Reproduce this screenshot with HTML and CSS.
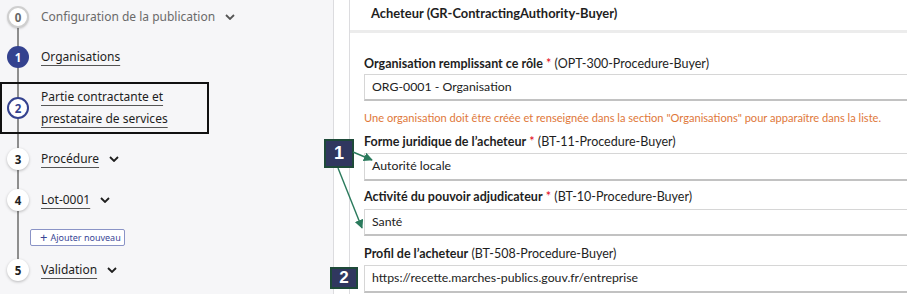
FILE: index.html
```html
<!DOCTYPE html>
<html lang="fr">
<head>
<meta charset="utf-8">
<title>Partie contractante</title>
<link rel="stylesheet" href="styles.css">
</head>
<body>
<div class="page">
  <aside class="sidebar">
    <div class="steps">
      <div class="rail"></div>
      <div class="step s0">
        <span class="dot dot-muted">0</span>
        <span class="lbl lbl-muted">Configuration de la publication</span>
        <svg class="chev" viewBox="0 0 10 6" width="10" height="6"><path d="M1 1l4 4 4-4" fill="none" stroke="#555" stroke-width="1.8"/></svg>
      </div>
      <div class="step s1">
        <span class="dot dot-done">1</span>
        <span class="lbl link">Organisations</span>
      </div>
      <div class="step s2 current">
        <span class="dot dot-current">2</span>
        <span class="lbl link two">Partie contractante et<br>prestataire de services</span>
      </div>
      <div class="step s3">
        <span class="dot">3</span>
        <span class="lbl link">Procédure</span>
        <svg class="chev" viewBox="0 0 10 6" width="10" height="6"><path d="M1 1l4 4 4-4" fill="none" stroke="#1e1e1e" stroke-width="1.8"/></svg>
      </div>
      <div class="step s4">
        <span class="dot">4</span>
        <span class="lbl link">Lot-0001</span>
        <svg class="chev" viewBox="0 0 10 6" width="10" height="6"><path d="M1 1l4 4 4-4" fill="none" stroke="#1e1e1e" stroke-width="1.8"/></svg>
      </div>
      <button class="add"><span class="plus">+</span> Ajouter nouveau</button>
      <div class="step s5">
        <span class="dot">5</span>
        <span class="lbl link">Validation</span>
        <svg class="chev" viewBox="0 0 10 6" width="10" height="6"><path d="M1 1l4 4 4-4" fill="none" stroke="#1e1e1e" stroke-width="1.8"/></svg>
      </div>
    </div>
  </aside>
  <div class="gutter"></div>
  <main class="card">
    <div class="card-head">Acheteur (GR-ContractingAuthority-Buyer)</div>
    <div class="form">
      <div class="field f1">
        <div class="label"><b>Organisation remplissant ce rôle</b> <span class="req">*</span> (OPT-300-Procedure-Buyer)</div>
        <div class="input">ORG-0001 - Organisation</div>
        <div class="hint">Une organisation doit être créée et renseignée dans la section "Organisations" pour apparaître dans la liste.</div>
      </div>
      <div class="field f2">
        <div class="label"><b>Forme juridique de l’acheteur</b> <span class="req">*</span> (BT-11-Procedure-Buyer)</div>
        <div class="input">Autorité locale</div>
      </div>
      <div class="field f3">
        <div class="label"><b>Activité du pouvoir adjudicateur</b> <span class="req">*</span> (BT-10-Procedure-Buyer)</div>
        <div class="input">Santé</div>
      </div>
      <div class="field f4">
        <div class="label"><b>Profil de l’acheteur</b> (BT-508-Procedure-Buyer)</div>
        <div class="input">https://recette.marches-publics.gouv.fr/entreprise</div>
      </div>
    </div>
  </main>
</div>
<div class="badge badge1">1</div>
<div class="badge badge2">2</div>
<svg class="arrows" width="907" height="294" viewBox="0 0 907 294">
  <defs>
    <marker id="ah" viewBox="0 0 10 10" refX="9" refY="5" markerWidth="9" markerHeight="9" markerUnits="userSpaceOnUse" orient="auto">
      <path d="M0 0L10 5L0 10z" fill="#2a7a5c"/>
    </marker>
  </defs>
  <line x1="353" y1="152" x2="372" y2="160" stroke="#2a7a5c" stroke-width="1.4" marker-end="url(#ah)"/>
  <line x1="338" y1="168" x2="362" y2="228" stroke="#2a7a5c" stroke-width="1.4" marker-end="url(#ah)"/>
</svg>
</body>
</html>
```
FILE: styles.css
```css
html, body {
  margin: 0;
  padding: 0;
}
body {
  width: 907px;
  height: 294px;
  overflow: hidden;
  position: relative;
  background: #fff;
}
.page {
  display: flex;
  height: 294px;
}
.sidebar {
  width: 333px;
  flex: none;
  background: #f6f6f8;
  border-right: 1px solid #dcdcdf;
  font-family: "Noto Sans", sans-serif;
  font-size: 12px;
  color: #1e1e1e;
}
.steps {
  position: relative;
  padding-top: 6px;
}
.rail {
  position: absolute;
  left: 17px;
  top: 18px;
  width: 1.5px;
  height: 252px;
  background: #8e8e8e;
}
.step {
  position: relative;
  display: flex;
  align-items: center;
  height: 22px;
  padding-left: 7px;
}
.s1 { margin-top: 18px; }
.s2 {
  margin-top: 14px;
  height: 48px;
  width: 200px;
  padding-left: 5px;
  border: 2px solid #111;
}
.s3 { margin-top: 14px; }
.s4 { margin-top: 19px; }
.s5 { margin-top: 13px; }
.dot {
  width: 22px;
  height: 22px;
  flex: none;
  box-sizing: border-box;
  border-radius: 50%;
  background: #fff;
  display: flex;
  align-items: center;
  justify-content: center;
  font-weight: 700;
  font-size: 11.5px;
  color: #1e1e1e;
  box-shadow: 0 1px 3px rgba(0,0,0,0.25);
}
.dot-muted {
  border: 2px solid #cfcfcf;
  color: #666;
  box-shadow: 0 1px 2px rgba(0,0,0,0.15);
}
.dot-done {
  background: #34428f;
  color: #fff;
  box-shadow: none;
}
.dot-current {
  border: 2px solid #34428f;
  color: #34428f;
  box-shadow: none;
}
.lbl {
  margin-left: 12px;
  line-height: 22px;
}
.lbl-muted {
  color: #6a6a6a;
}
.link {
  text-decoration: underline;
  text-underline-offset: 4px;
  text-decoration-thickness: 1px;
  text-decoration-color: #555;
}
.two {
  line-height: 22px;
}
.chev {
  margin-left: 10px;
}
.add {
  display: flex;
  align-items: center;
  margin: 18px 0 0 30px;
  height: 17px;
  width: 95px;
  box-sizing: border-box;
  padding: 0 0 0 9px;
  background: #fff;
  border: 1px solid #8a93c6;
  border-radius: 2px;
  color: #3a4796;
  font-family: "Noto Sans", sans-serif;
  font-size: 9px;
  white-space: nowrap;
}
.plus {
  font-size: 13px;
  margin-right: 3px;
  line-height: 1;
}
.gutter {
  width: 15px;
  flex: none;
  background: #fff;
}
.card {
  flex: 1;
  border-left: 1px solid #dcdcdf;
  font-family: "Lato", sans-serif;
  font-size: 12.5px;
  color: #1e1e1e;
  min-width: 0;
}
.card-head {
  height: 30px;
  padding-left: 21px;
  font-weight: 700;
  font-size: 12.9px;
  line-height: 26px;
  border-bottom: 3px solid #ececec;
}
.form {
  padding: 23px 0 0 14px;
}
.label {
  line-height: 16px;
  white-space: nowrap;
}
.req {
  color: #e1000f;
}
.input {
  margin-top: 2px;
  height: 24px;
  box-sizing: content-box;
  border: 1px solid #d6d6d6;
  border-bottom: 2px solid #c2c2c2;
  border-right: none;
  padding-left: 7px;
  line-height: 24px;
  font-size: 12.3px;
  color: #222;
  white-space: nowrap;
}
.hint {
  margin-top: 9px;
  line-height: 16px;
  font-size: 11.1px;
  color: #e0783a;
  white-space: nowrap;
}
.f2 { margin-top: 8px; }
.f2 .input { margin-top: 3px; height: 25px; }
.f3 { margin-top: 8px; }
.f3 .input { margin-top: 4px; }
.f4 { margin-top: 10px; }
.f4 .input { margin-top: 3px; height: 25px; }
.badge {
  position: absolute;
  box-sizing: border-box;
  background: #30375f;
  border: 2px solid #1e4a39;
  color: #fff;
  font-family: "Liberation Sans", Arial, sans-serif;
  font-weight: 700;
  display: flex;
  align-items: center;
  justify-content: center;
}
.badge1 {
  left: 324px;
  top: 139px;
  width: 30px;
  height: 29px;
  font-size: 18px;
}
.badge2 {
  left: 330px;
  top: 267px;
  width: 28px;
  height: 22px;
  font-size: 17px;
}
.arrows {
  position: absolute;
  left: 0;
  top: 0;
  pointer-events: none;
}
```
